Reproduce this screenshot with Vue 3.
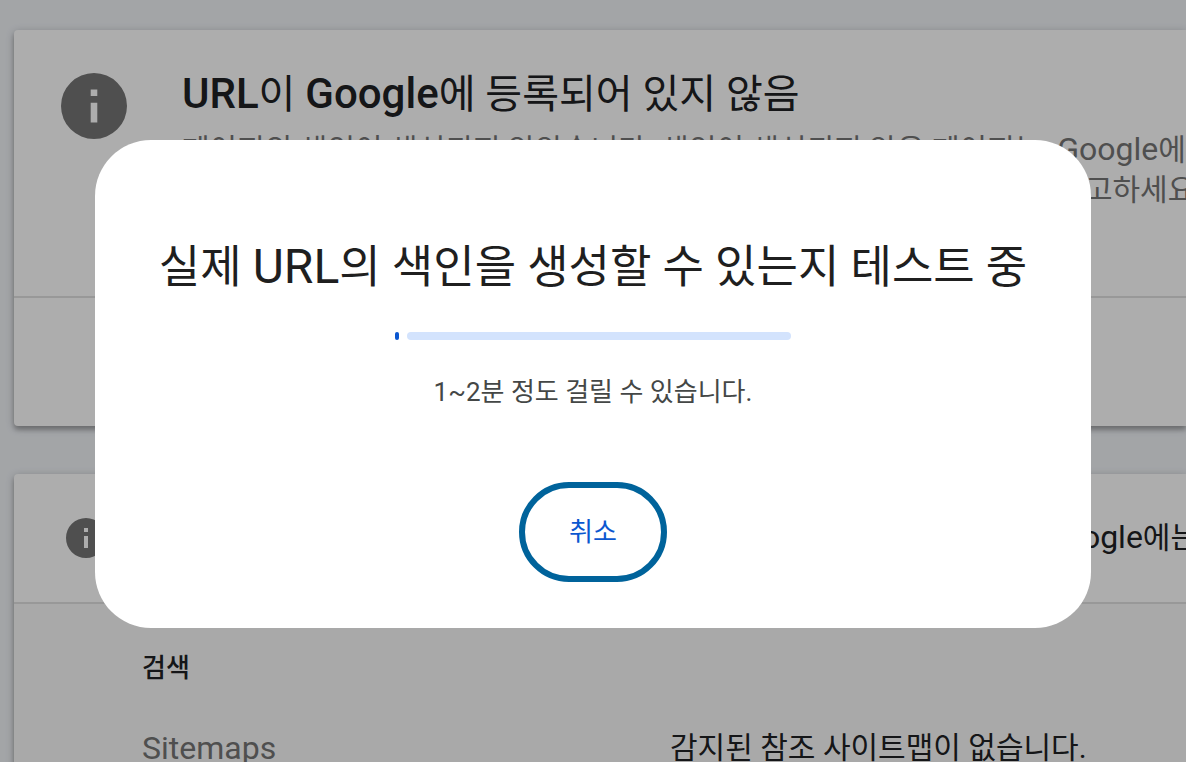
<script setup>
const details = [
  { label: 'Sitemaps', value: '감지된 참조 사이트맵이 없습니다.' },
]
</script>

<template>
  <div class="page">
    <main class="content">
      <section class="card">
        <div class="summary">
          <svg class="icon-large" viewBox="0 0 20 20" aria-hidden="true">
            <path fill-rule="evenodd" d="M10 0a10 10 0 1 0 0 20a10 10 0 0 0 0-20zM9 5h2v2H9zM9 9h2v6H9z" />
          </svg>
          <div>
            <h1 class="summary-title">
              <span class="latin">URL</span>이 <span class="latin">Google</span>에 등록되어 있지 않음
            </h1>
            <p class="summary-text">
              페이지의 색인이 생성되지 않았습니다. 색인이 생성되지 않은 페이지는&nbsp; <span class="latin">Google</span>에<br />
              게재될 수 없습니다. 자세한 내용은 아래 세부정보를 확인하고 도움말을 참고하세요.
            </p>
          </div>
        </div>
        <div class="card-footer"></div>
      </section>

      <section class="card">
        <header class="row">
          <svg class="icon-small" viewBox="0 0 20 20" aria-hidden="true">
            <path fill-rule="evenodd" d="M10 0a10 10 0 1 0 0 20a10 10 0 0 0 0-20zM9 5h2v2H9zM9 9h2v6H9z" />
          </svg>
          <h2 class="row-title">페이지 색인 생성</h2>
          <p class="row-status">
            페이지의 색인이 생성되지 않음: <span class="latin">Google</span>에는 알려지지 않은 URL
          </p>
        </header>
        <div class="details">
          <h3 class="details-title">검색</h3>
          <dl v-for="item in details" :key="item.label" class="detail">
            <dt>{{ item.label }}</dt>
            <dd>{{ item.value }}</dd>
          </dl>
        </div>
      </section>
    </main>

    <div class="scrim">
      <div class="dialog" role="dialog" aria-modal="true" aria-labelledby="dialog-title">
        <h2 id="dialog-title" class="dialog-title">
          실제 <span class="latin">URL</span>의 색인을 생성할 수 있는지 테스트 중
        </h2>
        <div class="progress" role="progressbar" aria-labelledby="dialog-title">
          <span class="progress-active"></span>
          <span class="progress-track"></span>
        </div>
        <p class="dialog-text">1~2분 정도 걸릴 수 있습니다.</p>
        <button type="button" class="cancel">취소</button>
      </div>
    </div>
  </div>
</template>

<style>
body {
  margin: 0;
  overflow: hidden;
}
</style>

<style scoped>
.page {
  position: relative;
  height: 100vh;
  overflow: hidden;
  background: #f0f3f7;
  color: #202124;
  font-family: Roboto, "Noto Sans CJK KR", sans-serif;
}

h1, h2, h3, p, dl, dd {
  margin: 0;
  font-weight: 400;
}

.content {
  display: flex;
  flex-direction: column;
  gap: 48px;
  padding: 30px 0 0 14px;
}

.card {
  border-radius: 4px 0 0 4px;
  background: #fff;
  box-shadow: 0 4px 4px rgba(0, 0, 0, 0.2), 0 2px 8px rgba(0, 0, 0, 0.24);
  white-space: nowrap;
}

.summary {
  display: flex;
  gap: 55px;
  padding: 41px 0 86px 47px;
}

.icon-large {
  flex: none;
  width: 66px;
  height: 66px;
  margin-top: 2px;
  fill: #757575;
}

.summary-title {
  margin-bottom: 11px;
  font-size: 40px;
  line-height: 48px;
}

.summary-title .latin {
  font-size: 42px;
  font-weight: 500;
}

.summary-text {
  color: #757575;
  font-size: 30px;
  line-height: 40px;
}

.summary-text .latin,
.row-status .latin {
  font-size: 32px;
}

.latin {
  line-height: 1;
}

.card-footer {
  height: 128px;
  border-top: 2px solid #e0e0e0;
}

.row {
  display: grid;
  grid-template-columns: 40px 464px 1fr;
  column-gap: 38px;
  align-items: center;
  height: 128px;
  padding-left: 52px;
}

.icon-small {
  width: 40px;
  height: 40px;
  fill: #757575;
}

.row-title,
.row-status {
  font-size: 30px;
  line-height: 40px;
}

.details {
  height: 400px;
  padding: 46px 0 0 128px;
  border-top: 2px solid #e0e0e0;
  background: #fafafa;
}

.details-title {
  margin-bottom: 40px;
  font-size: 26px;
  font-weight: 500;
  line-height: 36px;
}

.detail {
  display: grid;
  grid-template-columns: 528px 1fr;
  line-height: 44px;
}

.detail dt {
  color: #757575;
  font-size: 32px;
}

.detail dd {
  font-size: 30px;
}

.scrim {
  position: absolute;
  inset: 0;
  display: flex;
  align-items: center;
  justify-content: center;
  padding-top: 6px;
  background: rgba(0, 0, 0, 0.32);
}

.dialog {
  box-sizing: border-box;
  display: flex;
  flex-direction: column;
  align-items: center;
  width: 84%;
  padding: 96px 48px 46px;
  border-radius: 56px;
  background: #fff;
}

.dialog-title {
  color: #1f1f1f;
  font-size: 45px;
  line-height: 64px;
  white-space: nowrap;
}

.dialog-title .latin {
  font-size: 48px;
}

.progress {
  display: flex;
  gap: 8px;
  width: 44%;
  height: 8px;
  margin: 32px 0;
}

.progress-active {
  width: 4px;
  border-radius: 2px;
  background: #0b57d0;
}

.progress-track {
  flex: 1;
  border-radius: 4px;
  background: #d3e3fd;
}

.dialog-text {
  margin-bottom: 70px;
  color: #444746;
  font-size: 26px;
  line-height: 40px;
}

.cancel {
  padding: 26px 44px;
  border: 6px solid #00639b;
  border-radius: 50px;
  background: #fff;
  color: #0b57d0;
  font: 400 26px/36px Roboto, "Noto Sans CJK KR", sans-serif;
}
</style>
